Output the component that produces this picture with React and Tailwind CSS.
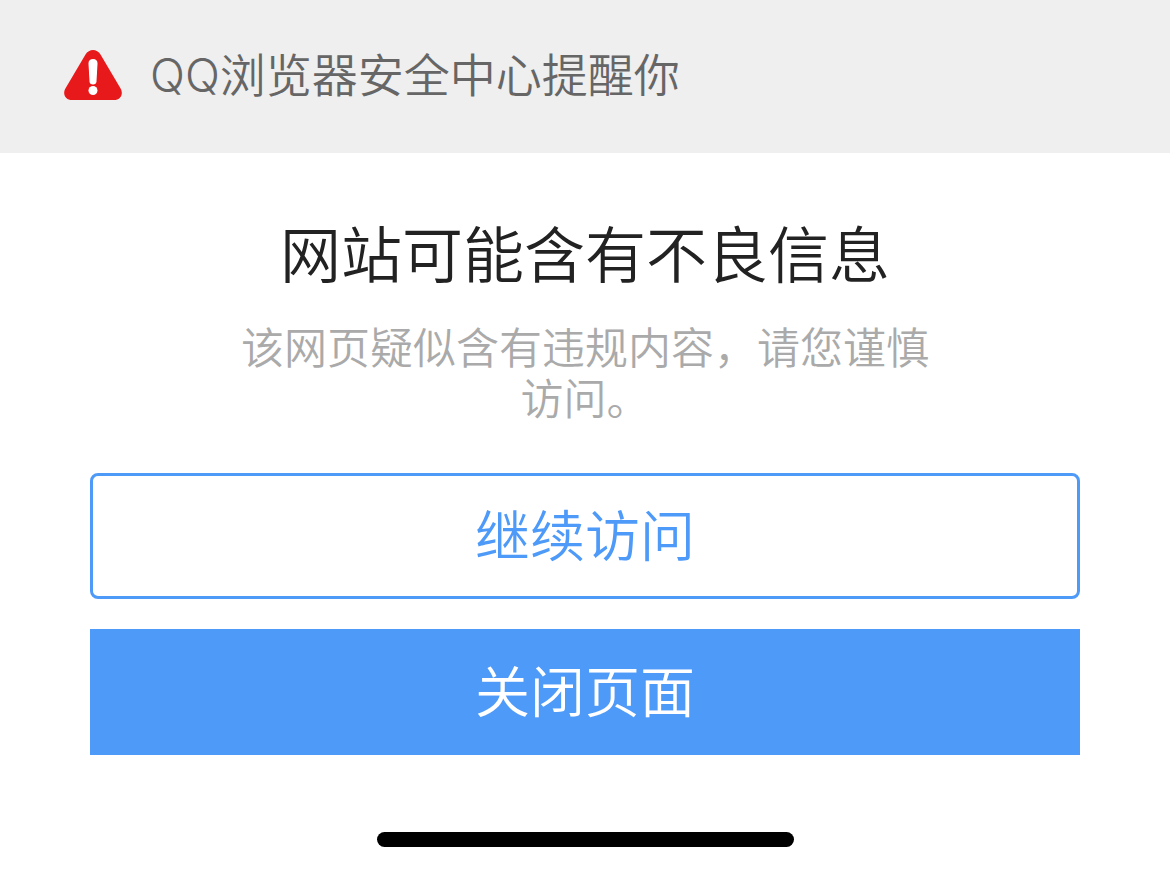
import React from 'react';

function WarningIcon() {
    return (
        <svg viewBox="0 0 58 50" className="w-[58px] h-[50px] shrink-0" aria-hidden="true">
            <path
                d="M21.500 4.500C25 -1.500 33 -1.500 36.500 4.500L56.300 38C60 44 56.500 50 50 50H8C1.500 50 -2 44 1.700 38Z"
                fill="#e8191b"
            />
            <path d="M24.500 13.500Q24.500 9 29 9Q33.500 9 33.500 13.500L32.500 31.500Q32.300 34.500 29 34.500Q25.700 34.500 25.500 31.500Z" fill="#fff" />
            <circle cx="29" cy="40.500" r="4.500" fill="#fff" />
        </svg>
    );
}

function App() {
    return (
        <div className="min-h-screen bg-white font-['Inter','Noto_Sans_CJK_SC',sans-serif] font-[350] flex flex-col">
            {/* Header */}
            <header className="bg-[#efefef] h-[153px] px-16 pb-1 flex items-center gap-7 text-[#666666]">
                <WarningIcon />
                <p className="text-[46px] leading-[60px]">QQ浏览器安全中心提醒你</p>
            </header>

            {/* Warning */}
            <main className="px-[90px] pt-16 text-center">
                <h1 className="text-[61px] leading-[78px] font-[350] text-[#222222]">网站可能含有不良信息</h1>
                <p className="mt-7 mx-auto max-w-[700px] text-[43px] leading-[51px] text-[#aaaaaa]">
                    该网页疑似含有违规内容，请您谨慎访问。
                </p>
                <div className="mt-12 flex flex-col gap-[30px] text-[55px]">
                    <button className="h-[126px] rounded-lg border-3 border-[#4e9af9] text-[#4e9af9]">继续访问</button>
                    <button className="h-[126px] bg-[#4e9af9] text-white">关闭页面</button>
                </div>
            </main>

            {/* Home indicator */}
            <div className="mt-auto mb-6 mx-auto h-[15px] w-[417px] rounded-full bg-black" />
        </div>
    );
}

export default App;
